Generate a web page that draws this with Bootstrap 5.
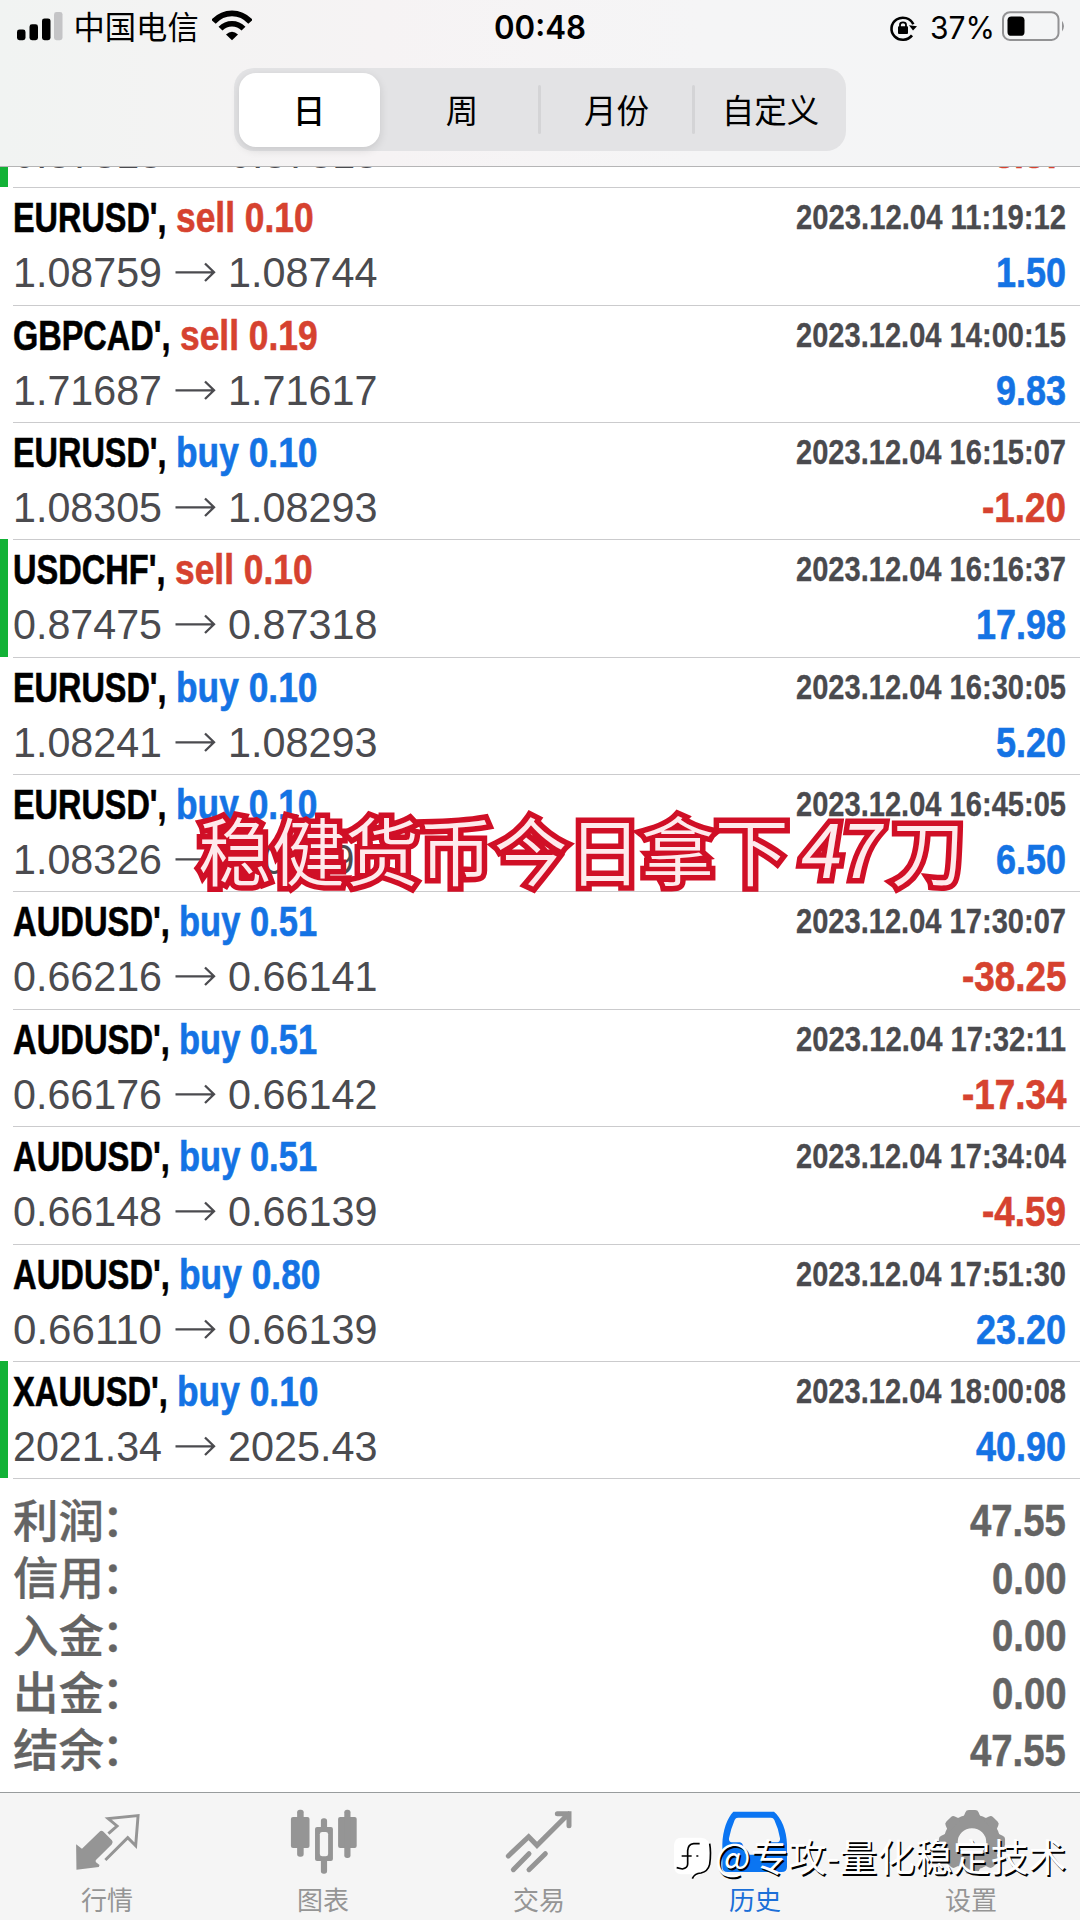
<!DOCTYPE html>
<html lang="zh-CN">
<head>
<meta charset="utf-8">
<meta name="viewport" content="width=device-width, initial-scale=1">
<title>历史</title>
<link href="https://cdn.jsdelivr.net/npm/bootstrap@5.3.0/dist/css/bootstrap.min.css" rel="stylesheet">
<style>
  :root { --cjk: "Noto Sans CJK SC", sans-serif; --num: "Liberation Sans", "Noto Sans CJK SC", sans-serif; }
  body { width: 1080px; height: 1920px; overflow: hidden; background: #fff; font-family: var(--num); color: #000; }
  .screen { width: 1080px; height: 1920px; }
  .fit { display: inline-block; white-space: pre; }
  .fit > span { display: inline-block; transform-origin: 0 50%; white-space: pre; }
  .topbar { height: 167.4px; background: linear-gradient(90deg, #f1f3f2 0, #f6f3f4 35%, #f5f5f6 65%, #f4f5f6 100%); border-bottom: 1.4px solid #b5b5b6; }
  .status { height: 53.3px; padding: 0 14px 0 17px; }
  .status svg { height: 53.3px; }
  .carrier { font: 400 31.3px/40px var(--cjk); margin-left: 10.5px; padding-top: 6px; }
  .wifi { margin-left: 13px; }
  .rotation-lock { margin-right: 11px; }
  .battery { margin-left: 7px; }
  .clock { font: 600 32px/40px Inter, sans-serif; left: 494px; top: 7.5px; }
  .clock.fit { position: absolute; }
  .pct { font: 400 31.5px/40px Inter, sans-serif; padding-top: 7.5px; }
  .segments { width: 612px; height: 83px; padding: 0 0 0 4.5px; border-radius: 20px; background: #e3e3e5; margin-top: 15px; font: 400 32.5px/40px var(--cjk); }
  .seg { width: 154px; flex: none; padding-bottom: 2px; }
  .seg-wide { width: 160px; padding-left: 5px; }
  .seg-on { width: 141px; height: 74px; padding-bottom: 2px; flex: none; border-radius: 17px; background: #fff; font-weight: 500; box-shadow: 0 3px 10px rgba(0,0,0,.12); }
  .tick { width: 3px; height: 49px; background: #d4d4d6; border-radius: 2px; margin: 0 -1.5px; flex: none; }
  .peek { height: 19.9px; border-left: 8px solid #12b236; }
  .peek .fit { margin-left: 5px; }
  .peek .line-b { margin-top: -40px; }
  .deal { height: 117.36px; border-left: 8px solid transparent; padding: 0 14px 0 5.4px; background: linear-gradient(#cbcbcd,#cbcbcd) 5px 0 / 100% 1.4px no-repeat; }
  .deal.closed-tp { border-left-color: #12b236; }
  .line-a { height: 59px; padding-top: 4px; font-weight: 700; font-size: 42.6px; line-height: 52px; }
  .line-b { height: 52px; font-size: 42.6px; line-height: 52px; }
  .line-a > div .fit { -webkit-text-stroke: .6px; }
  .stamp { font-size: 34.9px; color: #4a4a4e; -webkit-text-stroke: .3px; }
  .quote { color: #4b4b4f; }
  .up { color: #1473e4; } .down { color: #d6422f; }
  .gain { font-weight: 700; -webkit-text-stroke: .6px; }
  .totals { border-top: 1.4px solid #cbcbcd; margin-left: 13px; padding: 13px 14px 0 0; height: 314px; color: #646464; }
  .total { height: 57.4px; }
  .total-name { font: 500 45.5px/50px var(--cjk); padding-bottom: 6px; -webkit-text-stroke: .3px; }
  .colon { display: inline-block; transform: translate(-2.5px, -1.5px); }
  .total-sum { font-weight: 700; font-size: 44px; line-height: 57px; -webkit-text-stroke: .5px; }
  .tabs { height: 128.5px; border-top: 1.4px solid #989c9d; background: #f5f5f5; color: #959595; font: 400 26px/34px var(--cjk); }
  .tab { width: 216px; padding-top: 14.5px; }
  .tab svg { width: 70px; height: 70px; }
  .tab span { margin: 4.5px 2px 0 0; }
  .tab-on span { color: #1b6fd8; }
  .caption-layer { left: 180px; top: 795px; }
  .author-mark { left: 673px; top: 1830px; color: #fff; text-shadow: 1.5px 1.5px 0 #000; font: 400 37.8px/50px var(--cjk); }
</style>
</head>
<body>
<div class="screen d-flex flex-column position-relative">
  <header class="topbar flex-shrink-0 d-flex flex-column align-items-center position-relative">
    <div class="status w-100 d-flex align-items-start">
      <svg width="46" viewBox="0 0 46 55" preserveAspectRatio="none"><g fill="#000"><rect x="0" y="30.500" width="8.500" height="11" rx="2.500"/><rect x="12.500" y="25" width="8.500" height="16.500" rx="2.500"/><rect x="25" y="19" width="8.500" height="22.500" rx="2.500"/></g><rect x="37" y="12.500" width="8.500" height="29" rx="2.500" fill="#c4c4c6"/></svg>
      <span class="carrier">中国电信</span>
      <svg class="wifi" width="40" viewBox="0 0 40 55" preserveAspectRatio="none"><g fill="none" stroke="#000" stroke-width="5"><path d="M1.500 22.500C12 11 28 11 38.500 22.500" stroke-width="6"/><path d="M8.500 29.500C15 22.800 25 22.800 31.500 29.500" stroke-width="5.500"/></g><path d="M20 41.500L14 35.500Q20 30 26 35.500Z"/></svg>
      <span class="clock fit" data-w="92"><span>00:48</span></span>
      <svg class="ms-auto rotation-lock" width="30" viewBox="0 0 30 55" preserveAspectRatio="none"><path d="M23 36.500A11.400 11.400 0 1 1 24.300 25" fill="none" stroke="#000" stroke-width="2.600"/><path d="M20 26L28 27L24 31.500Z"/><rect x="9" y="27" width="10" height="8" rx="1"/><path d="M11 28V25.500Q11 23 14 23Q17 23 17 25.500V28" fill="none" stroke="#000" stroke-width="1.800"/></svg>
      <span class="pct fit" data-w="65"><span>37%</span></span>
      <svg class="battery" width="64" viewBox="0 0 64 55" preserveAspectRatio="none"><rect x="1" y="12.700" width="55.500" height="28.500" rx="7" fill="none" stroke="#929294" stroke-width="2"/><rect x="5.500" y="17" width="17" height="20" rx="4"/><path d="M60 21.500Q64 27 60 32.500Z" fill="#929294"/></svg>
    </div>
    <div class="segments d-flex align-items-center">
      <div class="seg-on d-flex align-items-center justify-content-center">日</div>
      <div class="seg seg-wide text-center">周</div><i class="tick"></i>
      <div class="seg text-center">月份</div><i class="tick"></i>
      <div class="seg text-center">自定义</div>
    </div>
  </header>

  <div class="peek flex-shrink-0 overflow-hidden d-flex justify-content-between position-relative">
    <div class="line-b quote d-flex"><span class="fit" data-w="149"><span>0.87818</span></span><svg width="62" height="52"></svg><span class="fit" data-w="149"><span>0.87818</span></span></div>
    <div class="line-b gain down pe-3"><span class="fit" data-w="82"><span>-8.87</span></span></div>
  </div>

  <main id="deals" class="flex-shrink-0"></main>

  <section id="totals" class="totals flex-shrink-0"></section>

  <nav class="tabs d-flex flex-shrink-0">
    <div class="tab d-flex flex-column align-items-center">
      <svg viewBox="212 81 203.300 210" preserveAspectRatio="none"><path fill="#959595" d="M221 190L238 203L289 152Q294 147 299 151L325 178Q330 184 325 190L278 238V243L289 252L287 258L222 266Z"/><path d="M318 155L340 135L314 113L401 104L394 194L371 170L309 234" fill="none" stroke="#959595" stroke-width="8.500" stroke-linecap="square"/></svg><span>行情</span></div>
    <div class="tab d-flex flex-column align-items-center">
      <svg viewBox="839.400 81 203.300 210" preserveAspectRatio="none"><g fill="#959595"><rect x="845" y="108" width="54" height="93" rx="6"/><rect x="863" y="86" width="19" height="141" rx="8"/><rect x="982" y="108" width="54" height="93" rx="6"/><rect x="1000" y="86" width="18" height="145" rx="8"/><rect x="915" y="138" width="52" height="102" rx="6"/><rect x="932" y="112" width="18" height="166" rx="8"/></g><rect x="929" y="153" width="24" height="73" rx="7" fill="#f5f5f5"/></svg><span>图表</span></div>
    <div class="tab d-flex flex-column align-items-center">
      <svg viewBox="30 21 210 210"><g fill="none" stroke="#959595" stroke-width="15" stroke-linecap="round"><path d="M40 165L101 107L126 133L221 38M187 38H222V74"/><path d="M55 206L102 158M102 206L151 158"/></g></svg><span>交易</span></div>
    <div class="tab tab-on d-flex flex-column align-items-center">
      <svg viewBox="243 21 210 210"><path fill="#0b75f2" fill-rule="evenodd" d="M280 32H402C424 50 440 88 441 130V197Q441 213 425 213H263Q247 213 247 197V130C248 88 262 50 280 32ZM294 50Q287 50 284 57Q273 82 267 112Q266 123 275 124H300Q307 125 309 133L315 155Q317 161 324 161H364Q371 161 373 155L378 133Q380 125 387 124H412Q421 123 420 112Q415 82 403 57Q400 50 393 50Z"/></svg><span>历史</span></div>
    <div class="tab d-flex flex-column align-items-center">
      <svg viewBox="1150.400 81 203.300 210" preserveAspectRatio="none"><g id="gear" fill="#959595"><circle cx="1252" cy="183" r="62" fill="none" stroke="#959595" stroke-width="41"/></g></svg><span>设置</span></div>
  </nav>

  <svg class="caption-layer position-absolute" width="820" height="110" viewBox="180 795 820 110">
    <g font-family="Noto Sans CJK SC" font-size="73.500" font-weight="350" fill="#feeaec" stroke="#d00f26" stroke-width="11" paint-order="stroke" stroke-linejoin="miter" stroke-miterlimit="3">
      <text y="880" x="198 271.700 345.400 419 494 568 641 715">稳健货币今日拿下</text>
      <text transform="translate(798 878) skewX(-9)" x="0 40" y="0" font-weight="400">47</text>
      <text y="880" x="891">刀</text>
    </g>
  </svg>

  <div class="author-mark position-absolute d-flex align-items-center text-nowrap">
    <svg width="42" height="50" viewBox="102 102 126 150"><path d="M126 125H186Q214 127 214 160V203Q214 225 190 232L160 249L158 235H126Q105 232 105 210V148Q106 126 126 125Z" fill="#fff"/><g fill="none" stroke="#000" stroke-width="5"><path d="M128 180H146V164Q147 145 164 143H182M146 180V204Q146 216 130 219L113 215M146 180H158M172 180H178" /><path d="M212 143Q217 170 212 205Q207 226 186 231Q166 232 160 248"/></g></svg>
    <span>@专攻-量化稳定技术</span>
  </div>
</div>

<script src="https://cdn.jsdelivr.net/npm/bootstrap@5.3.0/dist/js/bootstrap.bundle.min.js"></script>
<script>
  // symbol, advance of symbol, side, volume, prices, time, profit, take-profit flag
  const deals = [
    ["EURUSD'", 162.5, "sell", "0.10", "1.08759", "1.08744", "2023.12.04 11:19:12", "1.50"],
    ["GBPCAD'", 166.5, "sell", "0.19", "1.71687", "1.71617", "2023.12.04 14:00:15", "9.83"],
    ["EURUSD'", 162.5, "buy", "0.10", "1.08305", "1.08293", "2023.12.04 16:15:07", "-1.20"],
    ["USDCHF'", 161.5, "sell", "0.10", "0.87475", "0.87318", "2023.12.04 16:16:37", "17.98", 1],
    ["EURUSD'", 162.5, "buy", "0.10", "1.08241", "1.08293", "2023.12.04 16:30:05", "5.20"],
    ["EURUSD'", 162.5, "buy", "0.10", "1.08326", "1.08391", "2023.12.04 16:45:05", "6.50"],
    ["AUDUSD'", 166, "buy", "0.51", "0.66216", "0.66141", "2023.12.04 17:30:07", "-38.25"],
    ["AUDUSD'", 166, "buy", "0.51", "0.66176", "0.66142", "2023.12.04 17:32:11", "-17.34"],
    ["AUDUSD'", 166, "buy", "0.51", "0.66148", "0.66139", "2023.12.04 17:34:04", "-4.59"],
    ["AUDUSD'", 166, "buy", "0.80", "0.66110", "0.66139", "2023.12.04 17:51:30", "23.20"],
    ["XAUUSD'", 164, "buy", "0.10", "2021.34", "2025.43", "2023.12.04 18:00:08", "40.90", 1]
  ];
  const fit = (t, attr, cls = "") => `<span class="fit ${cls}" ${attr}><span>${t}</span></span>`;
  const arrow = '<svg width="66" height="52" fill="none" stroke="#4b4b4f" stroke-width="2.3"><path d="M13.500 26.300H51.500M43 17.500L52 26.300L43 35"/></svg>';
  document.getElementById("deals").innerHTML = deals.map(d => `
    <div class="deal ${d[8] ? "closed-tp" : ""}">
      <div class="line-a d-flex justify-content-between">
        <div>${fit(d[0] + ", ", `data-w="${d[1]}"`)}${fit(d[2] + " " + d[3], `data-s="${d[3] === "0.51" ? .81 : .83}"`, d[2] === "buy" ? "up" : "down")}</div>
        ${fit(d[6], 'data-w="270"', "stamp")}
      </div>
      <div class="line-b d-flex justify-content-between">
        <div class="quote d-flex">${fit(d[4], 'data-w="149"')}${arrow}${fit(d[5], 'data-w="149.5"')}</div>
        ${fit(d[7], `data-s="${d[7][0] === "-" ? .865 : .845}"`, "gain " + (d[7][0] === "-" ? "down" : "up"))}
      </div>
    </div>`).join("");

  const totals = [["利润", "47.55"], ["信用", "0.00"], ["入金", "0.00"], ["出金", "0.00"], ["结余", "47.55"]];
  document.getElementById("totals").innerHTML = totals.map(t => `
    <div class="total d-flex justify-content-between align-items-center"><span class="total-name">${t[0]}<span class="colon">：</span></span>${fit(t[1], 'data-s=".87"', "total-sum")}</div>`).join("");

  // condense each text to its column width
  document.querySelectorAll(".fit").forEach(el => {
    const inner = el.firstElementChild, natural = inner.getBoundingClientRect().width;
    const width = el.dataset.w ? +el.dataset.w : natural * el.dataset.s;
    inner.style.transform = `scaleX(${width / natural})`;
    el.style.width = width + "px";
  });

  // gear teeth
  document.getElementById("gear").innerHTML += [...Array(8)].map((_, i) =>
    `<path d="M1220 113Q1231 105 1233 94Q1235 87 1243 87H1261Q1269 87 1271 94Q1273 105 1284 113Z" transform="rotate(${i * 45} 1252 183)"/>`).join("");
</script>
</body>
</html>
